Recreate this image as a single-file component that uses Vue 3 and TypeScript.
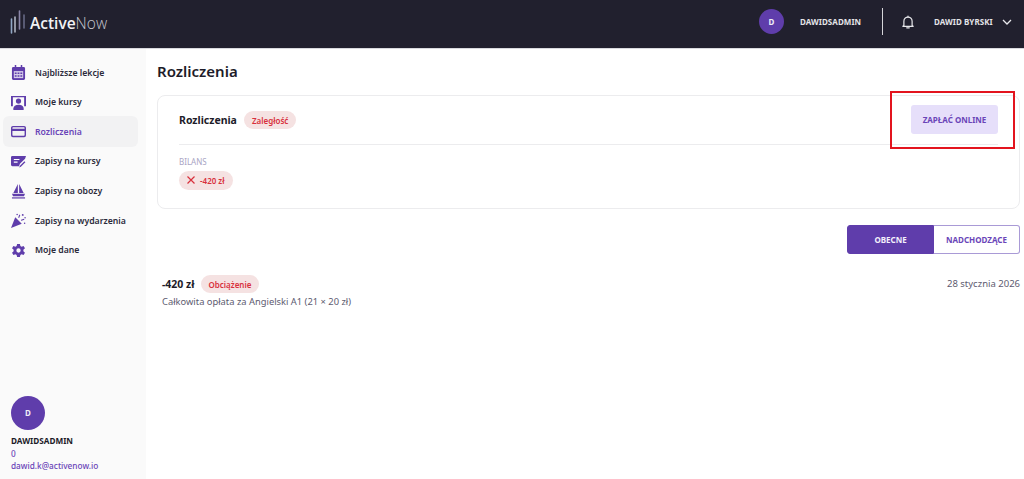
<script setup lang="ts">
const items = [
  { label: 'Najbliższe lekcje', icon: 'cal' },
  { label: 'Moje kursy', icon: 'person' },
  { label: 'Rozliczenia', icon: 'card', active: true },
  { label: 'Zapisy na kursy', icon: 'edit' },
  { label: 'Zapisy na obozy', icon: 'boat' },
  { label: 'Zapisy na wydarzenia', icon: 'party' },
  { label: 'Moje dane', icon: 'gear' },
]
</script>

<template>
  <div class="page">
    <header class="top">
      <div class="logo">
        <svg width="25" height="48" viewBox="0 0 25 48" fill="none" stroke-linecap="round">
          <path d="M11.500 19v14" stroke="#8fa6c4" stroke-width="1.600" />
          <path d="M15 17v15" stroke="#c2c9d6" stroke-width="1.400" />
          <path d="M19.500 11v18" stroke="#8a86a8" stroke-width="1.600" />
          <path d="M24 15v13" stroke="#777a99" stroke-width="1.300" />
        </svg>
        <span class="brand"><b>Active</b>Now</span>
      </div>
      <div class="top-right">
        <div class="avatar small">D</div>
        <span class="top-name user">DAWIDSADMIN</span>
        <div class="vr"></div>
        <svg class="bell" width="12" height="14" viewBox="0 0 14 16" fill="none" stroke="#e8e8ec" stroke-width="1.400">
          <path d="M2.200 12V7a4.800 4.800 0 0 1 9.600 0v5l1.200 1H1z" stroke-linejoin="round" />
          <path d="M5.500 14.800h3" stroke-linecap="round" />
          <path d="M7 1v1" stroke-linecap="round" />
        </svg>
        <span class="top-name full">DAWID BYRSKI</span>
        <svg class="chev" width="10" height="6" viewBox="0 0 10 6" fill="none" stroke="#e8e8ec" stroke-width="1.300">
          <path d="M1 1l4 4 4-4" />
        </svg>
      </div>
    </header>

    <div class="body">
      <aside class="side">
        <nav class="nav">
          <a v-for="it in items" :key="it.label" class="nav-item" :class="{ active: it.active }">
            <svg class="ico" width="15" height="15" viewBox="0 0 16 16" fill="#5f3dab">
              <template v-if="it.icon === 'cal'">
                <path d="M4 0h1.600v2h4.800V0H12v2h1.500A1.500 1.500 0 0 1 15 3.500V14.500A1.500 1.500 0 0 1 13.500 16h-11A1.500 1.500 0 0 1 1 14.500V3.500A1.500 1.500 0 0 1 2.500 2H4z" />
                <path fill="#fff" fill-opacity=".75" d="M3 6.500h10v7.500H3z" />
                <path d="M4 8h2v1.500H4zM7 8h2v1.500H7zM10 8h2v1.500h-2zM4 11h2v1.500H4zM7 11h2v1.500H7zM10 11h2v1.500h-2z" />
              </template>
              <template v-else-if="it.icon === 'person'">
                <path d="M0 1h16v11h-2V2.500H2V12H0z" />
                <circle cx="8" cy="6.500" r="2.800" />
                <path d="M2.500 16v-1.500C2.500 12 5 10.500 8 10.500s5.500 1.500 5.500 4V16z" />
              </template>
              <template v-else-if="it.icon === 'card'">
                <path fill-rule="evenodd" d="M2 2h12a2 2 0 0 1 2 2v8a2 2 0 0 1-2 2H2a2 2 0 0 1-2-2V4a2 2 0 0 1 2-2zM1.500 7.500v4.300c0 .4.300.7.700.7h11.600c.4 0 .7-.3.7-.7V7.500zM1.500 4.200v.8h13v-.8c0-.4-.3-.7-.7-.7H2.200c-.4 0-.7.300-.7.700z" />
              </template>
              <template v-else-if="it.icon === 'edit'">
                <path d="M1.500 2H16l-1 3-5.500 5.500L8.500 13H1.500A1.500 1.500 0 0 1 0 11.500v-8A1.500 1.500 0 0 1 1.500 2z" />
                <path fill="#fff" d="M3 5.200h6v1.200H3zM3 8h4v1.200H3z" />
                <path d="M10.500 11.500l4.800-4.800 1 1-4.800 4.800-1.800 1z" transform="translate(-1 1)" />
              </template>
              <template v-else-if="it.icon === 'boat'">
                <path d="M7.300 0v9.500H2.500zM8.700 0l4.800 9.500H8.700z" />
                <path d="M1 10.500h14l-1.200 2.500H2.200z" />
                <path d="M1 14.200h14v1.300H1z" />
              </template>
              <template v-else-if="it.icon === 'party'">
                <path d="M4.500 4.500l7 7L0 16z" />
                <path fill="none" stroke="#5f3dab" stroke-width="1.200" d="M8 5c1-1 .5-2 1.500-3M11 8c1-1 2-.5 3-1.500" />
                <circle cx="12.500" cy="2" r="1" />
                <circle cx="15" cy="5" r=".8" />
                <circle cx="6.500" cy="1.500" r=".8" />
                <circle cx="14.500" cy="11" r=".8" />
              </template>
              <template v-else>
                <path fill-rule="evenodd" d="M6.500 0h3l.5 2.200 1.300.7 2.100-.8 1.500 2.600-1.700 1.500v1.600l1.700 1.500-1.500 2.600-2.100-.8-1.300.7L9.500 14h-3L6 11.800l-1.300-.7-2.100.8L1.100 9.300l1.700-1.500V6.200L1.100 4.700l1.500-2.600 2.100.8L6 2.200zM8 4.700a2.300 2.300 0 1 0 0 4.600 2.300 2.300 0 0 0 0-4.600z" transform="translate(0 1)" />
              </template>
            </svg>
            <span>{{ it.label }}</span>
          </a>
        </nav>
        <div class="profile">
          <div class="avatar big">D</div>
          <div class="p-name">DAWIDSADMIN</div>
          <div class="p-link">0</div>
          <div class="p-link">dawid.k@activenow.io</div>
        </div>
      </aside>

      <main class="main">
        <h1 class="title">Rozliczenia</h1>
        <section class="card">
          <div class="card-head">
            <div class="card-title">
              <h2>Rozliczenia</h2>
              <span class="pill">Zaległość</span>
            </div>
            <button class="pay">ZAPŁAĆ ONLINE</button>
          </div>
          <div class="balance">
            <div class="bal-label">BILANS</div>
            <span class="pill amount">
              <svg width="8" height="8" viewBox="0 0 8 8" fill="none" stroke="#d8303c" stroke-width="1.200"><path d="M.5.5l7 7M7.500.5l-7 7" /></svg>
              -420 zł
            </span>
          </div>
          <div class="highlight"></div>
        </section>

        <div class="tabs">
          <button class="tab on">OBECNE</button>
          <button class="tab">NADCHODZĄCE</button>
        </div>

        <div class="entry">
          <div>
            <div class="entry-top">
              <b>-420 zł</b>
              <span class="pill">Obciążenie</span>
            </div>
            <div class="entry-desc">Całkowita opłata za Angielski A1 (21 × 20 zł)</div>
          </div>
          <div class="date">28 stycznia 2026</div>
        </div>
      </main>
    </div>
  </div>
</template>

<style>
html, body { margin: 0; background: #fff; overflow: hidden; }
</style>

<style scoped>
.page {
  width: 1024px;
  height: 479px;
  display: flex;
  flex-direction: column;
  font-family: "Noto Sans", sans-serif;
  color: #1d1c29;
}
.top {
  height: 48px;
  flex: none;
  background: #21202e;
  border-bottom: 1px solid #d9d9de;
  display: flex;
  align-items: center;
  justify-content: space-between;
  padding: 0 12px 0 0;
}
.logo { display: flex; align-items: center; }
.brand {
  font-size: 15.500px;
  color: #c4c6cf;
  margin: 0 0 3px 5px;
  font-weight: 300;
  font-family: "Open Sans", sans-serif;
}
.brand b { color: #f2f2f4; font-weight: 600; }
.top-right { display: flex; align-items: center; height: 100%; box-sizing: border-box; padding-bottom: 5px; }
.avatar {
  border-radius: 50%;
  background: #5f3dab;
  color: #f0edf8;
  font-weight: 700;
  display: flex;
  align-items: center;
  justify-content: center;
}
.avatar.small { width: 25px; height: 25px; font-size: 8px; }
.avatar.big { width: 34px; height: 34px; font-size: 8px; margin-bottom: 5px; }
.top-name { font-size: 8px; font-weight: 700; color: #e4e4e8; letter-spacing: .05px; white-space: nowrap; }
.user { margin-left: 16px; width: 62px; }
.vr { width: 1px; height: 27px; background: #d5d5d9; margin-left: 20px; }
.bell { margin-left: 19px; }
.full { margin-left: 20px; width: 58px; }
.chev { margin-left: 10px; }
.body { flex: 1; display: flex; min-height: 0; }
.side {
  width: 146px;
  flex: none;
  background: #fafafa;
  display: flex;
  flex-direction: column;
  justify-content: space-between;
  box-sizing: border-box;
  padding: 8.800px 8px 6px 3px;
}
.nav { display: flex; flex-direction: column; }
.nav-item {
  height: 29.600px;
  display: flex;
  align-items: center;
  gap: 9px;
  padding-left: 8px;
  border-radius: 6px;
  font-size: 8.700px;
  font-weight: 600;
  color: #2b2a3a;
  white-space: nowrap;
}
.nav-item.active { background: #f2f2f3; color: #6a45b8; height: 31px; margin: -0.700px 0; }
.ico { flex: none; }
.profile { padding-left: 8px; }
.p-name { font-size: 8.200px; font-weight: 700; line-height: 12.700px; color: #1d1c29; }
.p-link { font-size: 8.250px; font-weight: 500; line-height: 12.700px; color: #6a45b8; }
.main { flex: 1; padding: 11px 4px 0 11px; min-width: 0; }
.title { margin: 0; font-size: 15px; font-weight: 600; line-height: 22px; color: #1d1c29; }
.card {
  position: relative;
  margin-top: 13px;
  height: 114px;
  box-sizing: border-box;
  border: 1px solid #ececee;
  border-radius: 8px;
  padding: 0 21px;
}
.card-head {
  height: 48px;
  display: flex;
  align-items: center;
  justify-content: space-between;
  border-bottom: 1px solid #ececee;
}
.card-title { display: flex; align-items: center; gap: 7px; }
.card-title h2 { margin: 0; font-size: 10.500px; font-weight: 700; color: #1d1c29; }
.pill {
  display: inline-flex;
  align-items: center;
  height: 18px;
  padding: 0 8px;
  border-radius: 9px;
  background: #f5e2e2;
  color: #d8303c;
  font-size: 8px;
  font-weight: 600;
}
.pay {
  width: 87px;
  height: 29px;
  border: 0;
  padding: 0;
  border-radius: 3px;
  background: #e6dffa;
  color: #6a45b8;
  font-family: inherit;
  font-size: 8px;
  font-weight: 700;
  transform: translate(0, -1px);
}
.balance { padding-top: 11px; }
.bal-label { font-size: 8px; line-height: 11px; color: #a9a5c4; }
.amount { gap: 5px; height: 19px; border-radius: 10px; padding: 0 8px; margin-top: 1px; }
.highlight {
  position: absolute;
  left: 732px;
  top: -5px;
  width: 125px;
  height: 58px;
  box-sizing: border-box;
  border: 2.500px solid #e3141e;
}
.tabs { display: flex; justify-content: flex-end; margin-top: 16px; }
.tab {
  width: 86px;
  height: 29px;
  box-sizing: border-box;
  border: 1px solid #a99ad6;
  border-left: 0;
  background: #fff;
  color: #6a45b8;
  padding: 0;
  font-family: inherit;
  font-size: 8px;
  font-weight: 700;
  border-radius: 0 3px 3px 0;
}
.tab.on {
  width: 87px;
  background: #5f3dab;
  border: 1px solid #5f3dab;
  color: #f3f0fb;
  border-radius: 3px 0 0 3px;
}
.entry {
  display: flex;
  justify-content: space-between;
  padding: 21px 0 0 5px;
}
.entry-top { display: flex; align-items: center; gap: 6px; }
.entry-top b { font-size: 10.500px; font-weight: 700; color: #1d1c29; }
.entry-desc { font-size: 9.350px; line-height: 13px; color: #5d5b70; margin-top: 2px; }
.date { font-size: 9.500px; color: #5d5b70; line-height: 14px; margin-top: 2px; }
</style>
